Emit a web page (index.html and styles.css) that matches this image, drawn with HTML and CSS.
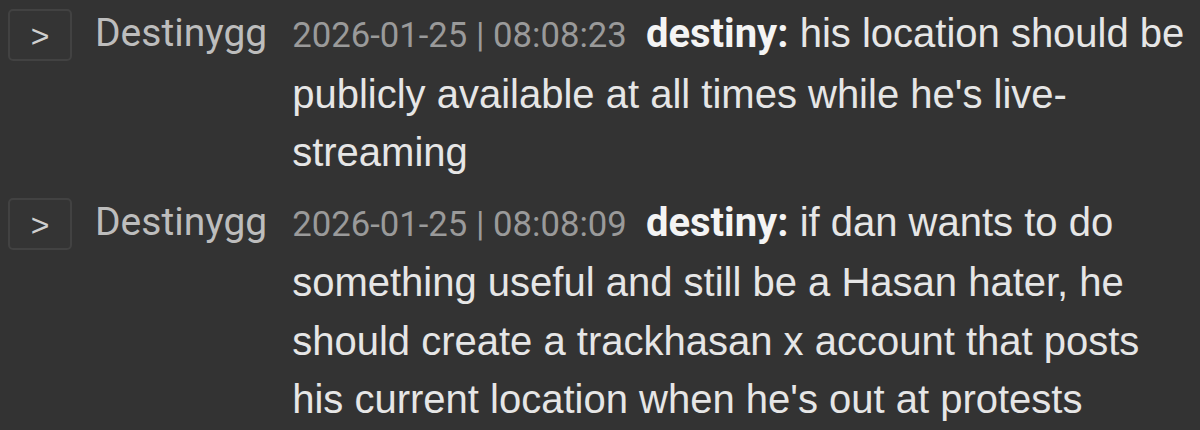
FILE: index.html
```html
<!DOCTYPE html>
<html lang="en">
<head>
    <meta charset="UTF-8">
    <meta name="viewport" content="width=device-width, initial-scale=1.0">
    <title>Chat Log</title>
    <link rel="stylesheet" href="styles.css">
</head>
<body>
    <div class="log">
        <div class="line">
            <button class="expand-btn">&gt;</button>
            <span class="channel">Destinygg</span>
            <p class="message">
                <span class="stamp">2026-01-25 | 08:08:23</span>
                <span class="user">destiny:</span>
                his location should be publicly available at all times while he's live-streaming
            </p>
        </div>

        <div class="line">
            <button class="expand-btn">&gt;</button>
            <span class="channel">Destinygg</span>
            <p class="message">
                <span class="stamp">2026-01-25 | 08:08:09</span>
                <span class="user">destiny:</span>
                if dan wants to do something useful and still be a Hasan hater, he should create a trackhasan x account that posts his current location when he's out at protests
            </p>
        </div>
    </div>
</body>
</html>
```

FILE: styles.css
```css
* {
    margin: 0;
    padding: 0;
    box-sizing: border-box;
}

body {
    font-family: Roboto, 'Noto Sans', sans-serif;
    background: #333333;
    color: #e6e6e6;
    padding: 4px 4px 0 8px;
}

.log {
    display: flex;
    flex-direction: column;
    gap: 11px;
}

.line {
    display: flex;
    align-items: flex-start;
    line-height: 58.5px;
}

.expand-btn {
    flex: none;
    width: 64px;
    height: 52px;
    margin-top: 5px;
    background: #343434;
    border: 2px solid #424242;
    border-radius: 5px;
    color: #cfcfcf;
    font-family: 'Liberation Sans', Arial, sans-serif;
    font-size: 32px;
    line-height: 50px;
    cursor: pointer;
}

.channel {
    flex: none;
    margin-left: 23px;
    font-size: 39px;
    color: #bdbdbd;
    white-space: nowrap;
}

/* message body uses an Arial-width face, the meta bits stay on Roboto */
.message {
    flex: 1;
    margin-left: 25px;
    font-family: 'Liberation Sans', Arial, sans-serif;
    font-size: 40px;
}

.stamp {
    font-family: Roboto, sans-serif;
    font-size: 34.7px;
    color: #9a9a9a;
    margin-right: 8px;
}

.user {
    font-family: Roboto, sans-serif;
    font-size: 40px;
    font-weight: 700;
    color: #f4f4f4;
}
```
